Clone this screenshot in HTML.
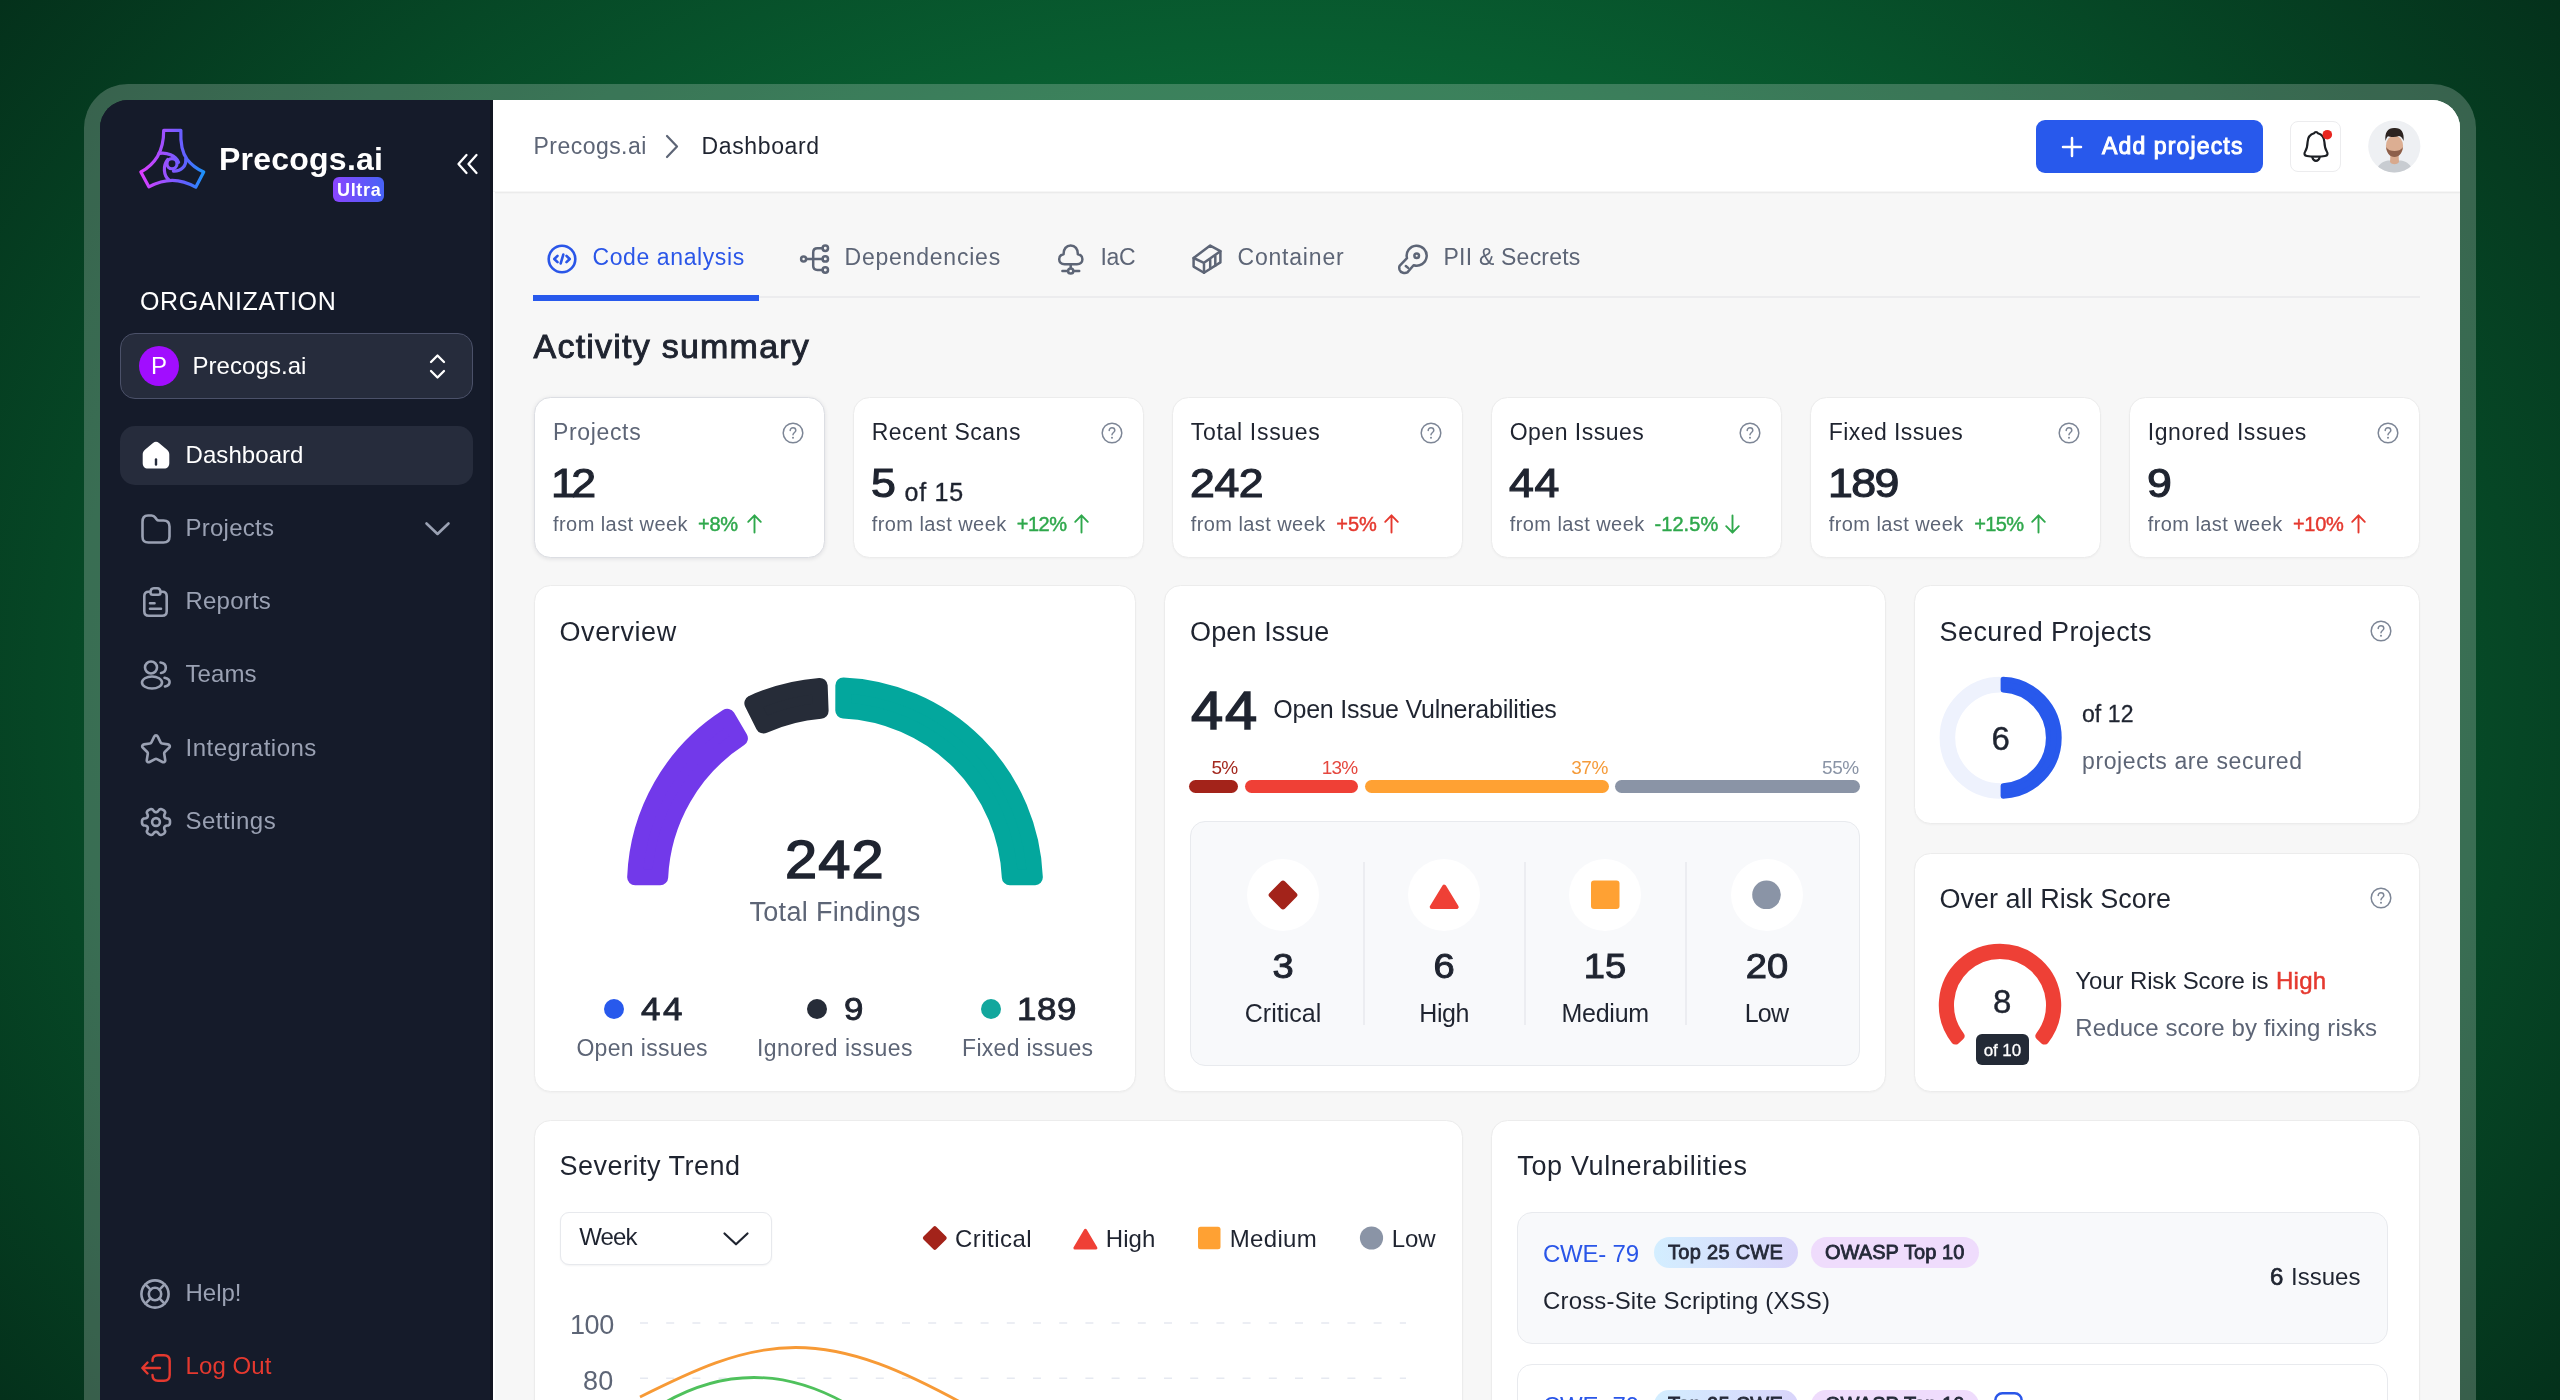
<!DOCTYPE html>
<html lang="en"><head>
<meta charset="utf-8">
<title>Precogs.ai Dashboard</title>
<style>
*{box-sizing:border-box;margin:0;padding:0}
html,body{width:2560px;height:1400px;overflow:hidden}
body{font-family:"Liberation Sans",sans-serif;color:#1f2430;background:#04311b radial-gradient(ellipse 1580px 1193px at 1280px 700px,rgb(13,147,74) 0%,rgb(4,49,27) 100%);position:relative}
.t{position:absolute;white-space:nowrap;line-height:1;transform:translateY(-50%)}
.c{transform:translate(-50%,-50%)}
.r{transform:translate(-100%,-50%)}
svg{position:absolute;overflow:visible}
#frame{position:absolute;left:84px;top:84px;width:2392px;height:1400px;border-radius:44px;background:rgba(255,255,255,.208)}
#app{position:absolute;left:100px;top:100px;width:2360px;height:1400px;border-radius:28px;background:linear-gradient(90deg,#151b2a 0,#151b2a 393px,#fff 393px,#fff 100%);overflow:hidden}
#pg{position:absolute;left:-100px;top:-100px;width:2560px;height:1500px;will-change:transform}
#pg div{position:absolute}
#side{left:100px;top:100px;width:393px;height:1400px;background:#151b2a}
#head{left:493px;top:100px;width:1967px;height:94px;background:linear-gradient(#fff 0,#fff 91px,#f6f6f6 91px,#f6f6f6 92px,#ebebeb 92px,#ebebeb 93px,#f3f3f3 93px,#f3f3f3 94px)}
.card{background:#fff;border:1.5px solid #ececec;border-radius:16.5px;box-shadow:0 1px 2px rgba(16,24,40,.03)}
.nav{color:#9aa1b3;font-size:24px;left:185.5px}
.g{color:#5d6576}
.b{font-weight:700}
.sb{font-weight:400;-webkit-text-stroke:.028em currentColor}
.ic{fill:none;stroke:#9aa1b3;stroke-width:2.6;stroke-linecap:round;stroke-linejoin:round}
.tic{fill:none;stroke:#5d6576;stroke-width:2.5;stroke-linecap:round;stroke-linejoin:round}
</style>
</head>
<body>
<div id="frame"></div>
<div id="app"><div id="pg">
<!-- SIDEBAR -->
<div id="side"></div><div style="left:490px;top:100px;width:3px;height:1400px;background:#121521"></div>
<svg style="left:130px;top:120px" width="100" height="80" viewBox="0 0 1750 1400">
<defs><linearGradient id="lg" x1="190" y1="0" x2="1290" y2="0" gradientUnits="userSpaceOnUse"><stop offset="0" stop-color="#dd3cff"></stop><stop offset=".45" stop-color="#8e55ff"></stop><stop offset=".72" stop-color="#5b62ff"></stop><stop offset="1" stop-color="#1b93fb"></stop></linearGradient></defs>
<g fill="none" stroke="url(#lg)" stroke-width="56" stroke-linejoin="round" stroke-linecap="round">
<path d="M590 180 L890 180 C880 420 930 600 1000 690 C1080 790 1180 860 1290 910 L1150 1175 C1000 1090 870 1055 740 1055 C610 1055 480 1090 330 1170 L190 910 C300 850 400 770 480 640 C540 540 590 400 590 180 Z"></path>
<circle cx="735" cy="765" r="88"></circle>
<path d="M510 585 C640 560 800 620 850 740"></path>
<path d="M975 685 C990 800 900 900 760 895"></path>
<path d="M680 1045 C590 980 570 800 660 690"></path>
</g></svg>
<div class="t b" style="left: 219px; top: 158.5px; font-size: 32px; color: rgb(255, 255, 255); letter-spacing: 0.23px;">Precogs.ai</div>
<div style="left:333px;top:177px;width:51px;height:25px;border-radius:6px;background:linear-gradient(90deg,#8a45ff,#4763f6)"></div>
<div class="t b" style="left: 337px; top: 189.5px; font-size: 18px; color: rgb(255, 255, 255); letter-spacing: 0.66px;">Ultra</div>
<svg style="left:457px;top:154px" width="21" height="20" viewBox="0 0 21 20"><path d="M9.5 1 L1.5 10 L9.5 19 M19.5 1 L11.5 10 L19.5 19" fill="none" stroke="#fff" stroke-width="2.3" stroke-linecap="round" stroke-linejoin="round"></path></svg>
<div class="t" style="left: 140px; top: 301px; font-size: 25px; color: rgb(255, 255, 255); letter-spacing: 0.66px;">ORGANIZATION</div>
<div style="left:120px;top:333px;width:353px;height:66px;border-radius:15px;background:#262c3c;border:1.5px solid #4b5169"></div>
<div style="left:139px;top:346px;width:40px;height:40px;border-radius:50%;background:#a10dff"></div>
<div class="t c" style="left:159px;top:366px;font-size:24px;color:#fff">P</div>
<div class="t" style="left: 192.5px; top: 366px; font-size: 24px; color: rgb(255, 255, 255); letter-spacing: 0.06px;">Precogs.ai</div>
<svg style="left:429px;top:353px" width="17" height="27" viewBox="0 0 17 27"><path d="M2 9 L8.5 2.5 L15 9 M2 18 L8.5 24.5 L15 18" fill="none" stroke="#fff" stroke-width="2.3" stroke-linecap="round" stroke-linejoin="round"></path></svg>
<div style="left:120px;top:426px;width:353px;height:59px;border-radius:15px;background:#262c3c"></div>
<svg style="left:141px;top:440px" width="30" height="30" viewBox="0 0 30 30"><path d="M15 1.8 C16 1.8 17 2.2 18 3 L25.5 9.2 C27.5 10.8 28.3 12.2 28.3 14.5 L28.3 23 C28.3 26.5 26.5 28.6 23 28.6 L7 28.6 C3.5 28.6 1.7 26.5 1.7 23 L1.7 14.5 C1.7 12.2 2.5 10.8 4.5 9.2 L12 3 C13 2.2 14 1.8 15 1.8 Z" fill="#fff"></path><path d="M15 19.5 L15 24.5" stroke="#262c3c" stroke-width="2.4" stroke-linecap="round"></path></svg>
<div class="t" style="left: 185.5px; top: 455px; font-size: 24px; color: rgb(255, 255, 255); letter-spacing: 0.07px;">Dashboard</div>
<!-- projects -->
<svg style="left:141px;top:514px" width="30" height="30" viewBox="0 0 30 30"><path class="ic" d="M1.5 8 C1.5 3.5 3 1.5 7 1.5 L10.5 1.5 C12.5 1.5 13.2 2 14.3 3.6 L15.5 5.2 C16.2 6.2 16.8 6.5 18 6.5 L22.5 6.5 C26.8 6.5 28.5 8.5 28.5 12.5 L28.5 22.5 C28.5 26.8 26.8 28.5 22.5 28.5 L7.5 28.5 C3.2 28.5 1.5 26.8 1.5 22.5 Z"></path></svg>
<div class="t nav" style="top: 528px; letter-spacing: 0.24px;">Projects</div>
<svg style="left:425px;top:522px" width="25" height="14" viewBox="0 0 25 14"><path class="ic" d="M1.5 1.5 L12.5 12 L23.5 1.5"></path></svg>
<!-- reports -->
<svg style="left:143px;top:587px" width="25" height="30" viewBox="0 0 25 30"><path class="ic" d="M7.5 4.8 L5.5 4.8 C2.8 4.8 1.3 6.3 1.3 9 L1.3 24.2 C1.3 27.2 2.8 28.7 5.8 28.7 L19.2 28.7 C22.2 28.7 23.7 27.2 23.7 24.2 L23.7 9 C23.7 6.3 22.2 4.8 19.5 4.8 L17.5 4.8 M7.5 5.5 C7.5 2.8 8.5 1.3 10.8 1.3 L14.2 1.3 C16.5 1.3 17.5 2.8 17.5 5.5 C17.5 7 16.8 7.7 15.3 7.7 L9.7 7.7 C8.2 7.7 7.5 7 7.5 5.5 Z M7 16.3 L11.5 16.3 M7 21.8 L18 21.8"></path></svg>
<div class="t nav" style="top: 601px; letter-spacing: 0.22px;">Reports</div>
<!-- teams -->
<svg style="left:140px;top:660px" width="31" height="30" viewBox="0 0 31 30"><g class="ic"><circle cx="11" cy="7.5" r="6"></circle><ellipse cx="12" cy="22.5" rx="10" ry="6"></ellipse><path d="M20.5 2.5 C23.5 2.8 25.8 4.8 25.8 7.8 C25.8 10.5 23.8 12.6 21 13 M24.5 17.8 C27.8 18.5 29.6 20 29.6 22 C29.6 24 28 25.8 25 26.5"></path></g></svg>
<div class="t nav" style="top: 674px; letter-spacing: 0.07px;">Teams</div>
<!-- integrations -->
<svg style="left:141px;top:734px" width="30" height="30" viewBox="0 0 30 30"><path class="ic" d="M13.2 2.6 C14 1 16 1 16.8 2.6 L19.6 8.4 C19.9 9 20.4 9.4 21.1 9.5 L27 10.4 C28.8 10.7 29.4 12.6 28.1 13.8 L23.8 18 C23.3 18.5 23.1 19.1 23.2 19.8 L24.2 26 C24.5 27.7 22.9 28.8 21.4 28 L16 25.1 C15.4 24.8 14.6 24.8 14 25.1 L8.6 28 C7.1 28.8 5.5 27.7 5.8 26 L6.8 19.8 C6.9 19.1 6.7 18.5 6.2 18 L1.9 13.8 C0.6 12.6 1.2 10.7 3 10.4 L8.9 9.5 C9.6 9.4 10.1 9 10.4 8.4 Z"></path></svg>
<div class="t nav" style="top: 748px; letter-spacing: 0.49px;">Integrations</div>
<!-- settings -->
<svg style="left:140.5px;top:806.9px" width="30" height="30" viewBox="0 0 30 30"><g class="ic" stroke-width="2.5"><circle cx="15" cy="15" r="3.9"></circle><path d="M29.00 15.00 L28.99 14.39 L28.95 13.78 L28.84 13.18 L28.54 12.61 L28.13 12.09 L27.58 11.63 L26.21 11.47 L25.16 11.30 L24.55 11.04 L24.09 10.76 L23.74 10.45 L23.49 10.10 L23.31 9.70 L23.22 9.24 L23.20 8.71 L23.28 8.05 L23.67 7.06 L24.21 5.79 L24.09 5.08 L23.84 4.47 L23.50 3.93 L23.03 3.53 L22.52 3.19 L22.00 2.88 L21.46 2.58 L20.92 2.31 L20.34 2.10 L19.70 2.08 L19.04 2.17 L18.37 2.42 L17.54 3.52 L16.88 4.35 L16.35 4.75 L15.87 5.00 L15.43 5.15 L15.00 5.20 L14.57 5.15 L14.13 5.00 L13.65 4.75 L13.12 4.35 L12.46 3.52 L11.63 2.42 L10.96 2.17 L10.30 2.08 L9.66 2.10 L9.08 2.31 L8.54 2.58 L8.00 2.88 L7.48 3.19 L6.97 3.53 L6.50 3.93 L6.16 4.47 L5.91 5.08 L5.79 5.79 L6.33 7.06 L6.72 8.05 L6.80 8.71 L6.78 9.24 L6.69 9.70 L6.51 10.10 L6.26 10.45 L5.91 10.76 L5.45 11.04 L4.84 11.30 L3.79 11.47 L2.42 11.63 L1.87 12.09 L1.46 12.61 L1.16 13.18 L1.05 13.78 L1.01 14.39 L1.00 15.00 L1.01 15.61 L1.05 16.22 L1.16 16.82 L1.46 17.39 L1.87 17.91 L2.42 18.37 L3.79 18.53 L4.84 18.70 L5.45 18.96 L5.91 19.24 L6.26 19.55 L6.51 19.90 L6.69 20.30 L6.78 20.76 L6.80 21.29 L6.72 21.95 L6.33 22.94 L5.79 24.21 L5.91 24.92 L6.16 25.53 L6.50 26.07 L6.97 26.47 L7.48 26.81 L8.00 27.12 L8.54 27.42 L9.08 27.69 L9.66 27.90 L10.30 27.92 L10.96 27.83 L11.63 27.58 L12.46 26.48 L13.12 25.65 L13.65 25.25 L14.13 25.00 L14.57 24.85 L15.00 24.80 L15.43 24.85 L15.87 25.00 L16.35 25.25 L16.88 25.65 L17.54 26.48 L18.37 27.58 L19.04 27.83 L19.70 27.92 L20.34 27.90 L20.92 27.69 L21.46 27.42 L22.00 27.12 L22.52 26.81 L23.03 26.47 L23.50 26.07 L23.84 25.53 L24.09 24.92 L24.21 24.21 L23.67 22.94 L23.28 21.95 L23.20 21.29 L23.22 20.76 L23.31 20.30 L23.49 19.90 L23.74 19.55 L24.09 19.24 L24.55 18.96 L25.16 18.70 L26.21 18.53 L27.58 18.37 L28.13 17.91 L28.54 17.39 L28.84 16.82 L28.95 16.22 L28.99 15.61 Z"></path></g></svg>
<div class="t nav" style="top: 821px; letter-spacing: 0.5px;">Settings</div>
<!-- help -->
<svg style="left:140px;top:1279px" width="30" height="30" viewBox="0 0 30 30"><g class="ic"><circle cx="15" cy="15" r="13.6"></circle><circle cx="15" cy="15" r="6.2"></circle><path d="M5.4 5.4 L10.6 10.6 M24.6 5.4 L19.4 10.6 M5.4 24.6 L10.6 19.4 M24.6 24.6 L19.4 19.4"></path></g></svg>
<div class="t nav" style="top: 1293px; letter-spacing: -0.01px;">Help!</div>
<svg style="left:141px;top:1354.3px" width="30" height="28" viewBox="0 0 30 28"><g fill="none" stroke="#e5392f" stroke-width="2.4" stroke-linecap="round" stroke-linejoin="round"><path d="M11.5 7 C11.5 3 13 1.3 17 1.3 L23 1.3 C27 1.3 28.7 3 28.7 7 L28.7 21 C28.7 25 27 26.7 23 26.7 L17 26.7 C13 26.7 11.5 25 11.5 21"></path><path d="M19 14 L1.5 14 M6.5 8.5 L1.3 14 L6.5 19.5"></path></g></svg>
<div class="t" style="left: 185.5px; top: 1366px; font-size: 24px; color: rgb(229, 57, 47); letter-spacing: 0.09px;">Log Out</div>
<!-- HEADER -->
<div style="left:493px;top:100px;width:1967px;height:1400px;background:#f7f7f7"></div><div id="head"></div><div style="left:493.3px;top:192px;width:2px;height:1300px;background:#fff"></div>
<!--HC-->
<div class="t g" style="left: 533.5px; top: 145.8px; font-size: 23px; letter-spacing: 0.46px;">Precogs.ai</div>
<svg style="left:665px;top:134px" width="14" height="25" viewBox="0 0 14 25"><path d="M2 2 L12 12.5 L2 23" fill="none" stroke="#5d6576" stroke-width="2.2" stroke-linecap="round" stroke-linejoin="round"></path></svg>
<div class="t" style="left: 701.5px; top: 145.8px; font-size: 23px; color: rgb(31, 36, 48); letter-spacing: 0.64px;">Dashboard</div>
<div style="left:2036px;top:120px;width:227px;height:53px;border-radius:9px;background:#2859ec"></div>
<svg style="left:2062px;top:137px" width="20" height="20" viewBox="0 0 20 20"><path d="M10 1 L10 19 M1 10 L19 10" stroke="#fff" stroke-width="2.5" stroke-linecap="round"></path></svg>
<div class="t sb" style="left: 2102px; top: 145.8px; font-size: 23px; color: rgb(255, 255, 255); -webkit-text-stroke-width: 1px; letter-spacing: 1.14px;">Add projects</div>
<div style="left:2290px;top:121px;width:51px;height:51px;border-radius:8px;background:#fff;border:1.5px solid #ececee"></div>
<svg style="left:2300px;top:128px" width="36" height="36" viewBox="0 0 36 36"><g fill="none" stroke="#1c1f24" stroke-width="2.2" stroke-linecap="round" stroke-linejoin="round"><path d="M14.2 5.2 C14.8 3.6 17.2 3.6 17.8 5.2 C21.8 6.2 24.2 9.5 24.4 14 C24.6 18.5 25.2 21 26.8 23.5 C28.3 25.8 27.5 27.6 25 28 C21 28.7 11 28.7 7 28 C4.5 27.6 3.7 25.8 5.2 23.5 C6.8 21 7.4 18.5 7.6 14 C7.8 9.5 10.2 6.2 14.2 5.2 Z"></path><path d="M12.3 29.2 C13 31.8 14.5 32.8 16 32.8 C17.5 32.8 19 31.8 19.7 29.2"></path></g><circle cx="27.3" cy="6.7" r="4.8" fill="#e8251f"></circle></svg>
<svg style="left:2368px;top:120px" width="53" height="53" viewBox="0 0 53 53"><defs><clipPath id="av"><circle cx="26.3" cy="26.3" r="26.1"></circle></clipPath></defs><g clip-path="url(#av)"><rect width="53" height="53" fill="#eef0f3"></rect><path d="M8 53 C9 45 14 41.5 20 40.5 L33 40.5 C39 41.5 44 45 45 53 Z" fill="#c8ccd1"></path><path d="M22.5 33 L30.5 33 L31 42 C29 45 24 45 22 42 Z" fill="#d8a98d"></path><ellipse cx="26.5" cy="26" rx="8.6" ry="10.5" fill="#dcae92"></ellipse><path d="M18.2 27 C18.5 33 22 37 26.5 37 C31 37 34.5 33 34.8 27 C33 30 30 31 26.5 31 C23 31 20 30 18.2 27 Z" fill="#8d5f4a"></path><path d="M17.5 21 C16.5 12 20 8 26 8 C33 7.5 36.5 12 35.6 21 C34.5 18 33 16.5 31 16 C27 17.5 22 17 20 16.2 C18.5 17.5 18 19 17.5 21 Z" fill="#2c2320"></path></g></svg>
<!-- TABS -->
<div style="left:533px;top:296px;width:1887px;height:2px;background:#ececee"></div>
<div style="left:533px;top:295px;width:226px;height:5.5px;background:#2859ec"></div>
<svg style="left:547px;top:243.5px" width="30" height="30" viewBox="0 0 30 30"><g fill="none" stroke="#2a56e8" stroke-width="2.6" stroke-linecap="round" stroke-linejoin="round"><circle cx="15" cy="15" r="13.3"></circle><path d="M10.5 11.8 L7.3 15 L10.5 18.2 M19.5 11.8 L22.7 15 L19.5 18.2 M16.3 10.6 L13.7 19.4"></path></g></svg>
<div class="t" style="left: 592.5px; top: 257.1px; font-size: 23px; color: rgb(42, 86, 232); letter-spacing: 0.6px;">Code analysis</div>
<svg style="left:800px;top:243.5px" width="30" height="30" viewBox="0 0 30 30"><g class="tic" stroke-width="2.3"><circle cx="3.6" cy="14.9" r="2.5"></circle><circle cx="25.3" cy="4.2" r="2.7"></circle><circle cx="25.3" cy="14.9" r="2.7"></circle><circle cx="25.3" cy="26" r="2.7"></circle><path d="M6.2 14.9 L22.5 14.9 M22.5 4.2 L17.4 4.2 Q13.2 4.2 13.2 8.4 L13.2 21.8 Q13.2 26 17.4 26 L22.5 26"></path></g></svg>
<div class="t g" style="left: 844.5px; top: 257.1px; font-size: 23px; letter-spacing: 0.78px;">Dependencies</div>
<svg style="left:1057px;top:243px" width="28" height="31" viewBox="0 0 28 31"><g class="tic" stroke-width="2.3"><path d="M7.6 21.2 C4.2 21.2 2.2 19 2.2 16.2 C2.2 13.5 4 11.6 6.6 11.2 C6.4 6 9.4 2.4 13.7 2.4 C18 2.4 21 6 20.8 11.2 C23.4 11.6 25.4 13.5 25.4 16.2 C25.4 19 23.4 21.2 20 21.2 Z"></path><path d="M13.7 21.2 L13.7 25.2 M5.4 28 L11 28 M16.4 28 L22.2 28"></path><circle cx="13.7" cy="28" r="2.6"></circle></g></svg>
<div class="t g" style="left: 1100.5px; top: 257.1px; font-size: 23px; letter-spacing: -0.32px;">IaC</div>
<svg style="left:1192px;top:243.5px" width="30" height="30" viewBox="0 0 30 30"><g class="tic" stroke-width="2.3"><path d="M1.6 14 L18.2 1.6 L28.4 7.2 L28.4 18.4 L12 28.8 L1.6 22.6 Z"></path><path d="M1.6 14 L12 18.8 L28.4 7.2 M12 18.8 L12 28.8 M18.2 14.6 L18.2 24.6 M23.3 11 L23.3 21.4"></path></g></svg>
<div class="t g" style="left: 1237.5px; top: 257.1px; font-size: 23px; letter-spacing: 0.8px;">Container</div>
<svg style="left:1398px;top:243.5px" width="31" height="30" viewBox="0 0 31 30"><g class="tic" stroke-width="2.3"><path d="M9 14.2 A10 10 0 1 1 15.6 21.2 L9.4 28.4 C7 29.6 2.6 29 1.6 25.8 C1.2 24.4 1 22.6 1.8 21.6 Z"></path><circle cx="18.7" cy="11.8" r="2.3"></circle><path d="M7.8 22 L10.1 23.9"></path></g></svg>
<div class="t g" style="left: 1443.5px; top: 257.1px; font-size: 23px; letter-spacing: 0.22px;">PII &amp; Secrets</div>
<div class="t sb" style="left: 533.5px; top: 345.8px; font-size: 34px; color: rgb(31, 36, 48); letter-spacing: 1.23px;">Activity summary</div>
<!--/HC-->
<!--MC-->
<div class="card" style="left:534px;top:397px;width:290.5px;height:160.5px;border-color:#dcdee3;box-shadow:0 1px 4px rgba(16,24,40,.10)"></div>
<div class="t" style="left: 553px; top: 432.3px; font-size: 23px; color: rgb(93, 101, 118); letter-spacing: 0.65px;">Projects</div>
<svg style="left:781.7px;top:422px" width="22" height="22" viewBox="0 0 22 22"><g fill="none" stroke="#7d8696" stroke-width="1.5" stroke-linecap="round" stroke-linejoin="round"><circle cx="11" cy="11" r="9.8"></circle><path d="M8.2 8.6 C8.2 6.9 9.4 5.8 11 5.8 C12.6 5.8 13.8 6.9 13.8 8.4 C13.8 10.4 11 10.6 11 12.8"></path></g><circle cx="11" cy="15.8" r="1" fill="#7d8696"></circle></svg>
<div class="t sb" style="left: 551.2px; top: 482.5px; font-size: 41px; transform: translateY(-50%) scaleX(1.09); transform-origin: left center; color: rgb(31, 36, 48); letter-spacing: -4.14px;">12</div>
<div class="t" style="left: 553px; top: 523.8px; font-size: 20px; color: rgb(93, 101, 118); letter-spacing: 0.43px;">from last week</div>
<div class="t" style="left: 698px; top: 523.8px; font-size: 20px; color: rgb(47, 168, 76); -webkit-text-stroke: 0.45px rgb(47, 168, 76); letter-spacing: -0.24px;">+8%</div>
<svg style="left:746.5px;top:514.3px" width="15" height="20" viewBox="0 0 15 20"><path d="M7.5 18.5 L7.5 1.5 M1.2 7.8 L7.5 1.3 L13.8 7.8" fill="none" stroke="#2fa84c" stroke-width="1.9" stroke-linecap="round" stroke-linejoin="round"></path></svg>
<div class="card" style="left:853px;top:397px;width:290.5px;height:160.7px"></div>
<div class="t" style="left: 871.7px; top: 432.3px; font-size: 23px; color: rgb(31, 36, 48); letter-spacing: 0.5px;">Recent Scans</div>
<svg style="left:1100.7px;top:422px" width="22" height="22" viewBox="0 0 22 22"><g fill="none" stroke="#7d8696" stroke-width="1.5" stroke-linecap="round" stroke-linejoin="round"><circle cx="11" cy="11" r="9.8"></circle><path d="M8.2 8.6 C8.2 6.9 9.4 5.8 11 5.8 C12.6 5.8 13.8 6.9 13.8 8.4 C13.8 10.4 11 10.6 11 12.8"></path></g><circle cx="11" cy="15.8" r="1" fill="#7d8696"></circle></svg>
<div class="t sb" style="left:870.9000000000001px;top:482.5px;font-size:41px;transform:translateY(-50%) scaleX(1.09);transform-origin:left center;color:#1f2430">5</div>
<div class="t" style="left: 904.5px; top: 491.5px; font-size: 25px; color: rgb(31, 36, 48); -webkit-text-stroke: 0.35px rgb(31, 36, 48); letter-spacing: 0.75px;">of 15</div>
<div class="t" style="left: 871.7px; top: 523.8px; font-size: 20px; color: rgb(93, 101, 118); letter-spacing: 0.43px;">from last week</div>
<div class="t" style="left: 1016.8px; top: 523.8px; font-size: 20px; color: rgb(47, 168, 76); -webkit-text-stroke: 0.45px rgb(47, 168, 76); letter-spacing: -0.49px;">+12%</div>
<svg style="left:1074px;top:514.3px" width="15" height="20" viewBox="0 0 15 20"><path d="M7.5 18.5 L7.5 1.5 M1.2 7.8 L7.5 1.3 L13.8 7.8" fill="none" stroke="#2fa84c" stroke-width="1.9" stroke-linecap="round" stroke-linejoin="round"></path></svg>
<div class="card" style="left:1172px;top:397px;width:290.5px;height:160.7px"></div>
<div class="t" style="left: 1190.7px; top: 432.3px; font-size: 23px; color: rgb(31, 36, 48); letter-spacing: 0.7px;">Total Issues</div>
<svg style="left:1419.7px;top:422px" width="22" height="22" viewBox="0 0 22 22"><g fill="none" stroke="#7d8696" stroke-width="1.5" stroke-linecap="round" stroke-linejoin="round"><circle cx="11" cy="11" r="9.8"></circle><path d="M8.2 8.6 C8.2 6.9 9.4 5.8 11 5.8 C12.6 5.8 13.8 6.9 13.8 8.4 C13.8 10.4 11 10.6 11 12.8"></path></g><circle cx="11" cy="15.8" r="1" fill="#7d8696"></circle></svg>
<div class="t sb" style="left: 1189.9px; top: 482.5px; font-size: 41px; transform: translateY(-50%) scaleX(1.09); transform-origin: left center; color: rgb(31, 36, 48); letter-spacing: -0.43px;">242</div>
<div class="t" style="left: 1190.7px; top: 523.8px; font-size: 20px; color: rgb(93, 101, 118); letter-spacing: 0.43px;">from last week</div>
<div class="t" style="left: 1336.3px; top: 523.8px; font-size: 20px; color: rgb(229, 57, 47); -webkit-text-stroke: 0.45px rgb(229, 57, 47); letter-spacing: -0.04px;">+5%</div>
<svg style="left:1384px;top:514.3px" width="15" height="20" viewBox="0 0 15 20"><path d="M7.5 18.5 L7.5 1.5 M1.2 7.8 L7.5 1.3 L13.8 7.8" fill="none" stroke="#e5392f" stroke-width="1.9" stroke-linecap="round" stroke-linejoin="round"></path></svg>
<div class="card" style="left:1491px;top:397px;width:290.5px;height:160.7px"></div>
<div class="t" style="left: 1509.7px; top: 432.3px; font-size: 23px; color: rgb(31, 36, 48); letter-spacing: 0.49px;">Open Issues</div>
<svg style="left:1738.7px;top:422px" width="22" height="22" viewBox="0 0 22 22"><g fill="none" stroke="#7d8696" stroke-width="1.5" stroke-linecap="round" stroke-linejoin="round"><circle cx="11" cy="11" r="9.8"></circle><path d="M8.2 8.6 C8.2 6.9 9.4 5.8 11 5.8 C12.6 5.8 13.8 6.9 13.8 8.4 C13.8 10.4 11 10.6 11 12.8"></path></g><circle cx="11" cy="15.8" r="1" fill="#7d8696"></circle></svg>
<div class="t sb" style="left: 1508.9px; top: 482.5px; font-size: 41px; transform: translateY(-50%) scaleX(1.09); transform-origin: left center; color: rgb(31, 36, 48); letter-spacing: 0.52px;">44</div>
<div class="t" style="left: 1509.7px; top: 523.8px; font-size: 20px; color: rgb(93, 101, 118); letter-spacing: 0.43px;">from last week</div>
<div class="t" style="left: 1654.5px; top: 523.8px; font-size: 20px; color: rgb(47, 168, 76); -webkit-text-stroke: 0.45px rgb(47, 168, 76); letter-spacing: 0.06px;">-12.5%</div>
<svg style="left:1725px;top:514.3px" width="15" height="20" viewBox="0 0 15 20"><path d="M7.5 1.5 L7.5 18.5 M1.2 12.2 L7.5 18.7 L13.8 12.2" fill="none" stroke="#2fa84c" stroke-width="1.9" stroke-linecap="round" stroke-linejoin="round"></path></svg>
<div class="card" style="left:1810px;top:397px;width:290.5px;height:160.7px"></div>
<div class="t" style="left: 1828.7px; top: 432.3px; font-size: 23px; color: rgb(31, 36, 48); letter-spacing: 0.45px;">Fixed Issues</div>
<svg style="left:2057.7px;top:422px" width="22" height="22" viewBox="0 0 22 22"><g fill="none" stroke="#7d8696" stroke-width="1.5" stroke-linecap="round" stroke-linejoin="round"><circle cx="11" cy="11" r="9.8"></circle><path d="M8.2 8.6 C8.2 6.9 9.4 5.8 11 5.8 C12.6 5.8 13.8 6.9 13.8 8.4 C13.8 10.4 11 10.6 11 12.8"></path></g><circle cx="11" cy="15.8" r="1" fill="#7d8696"></circle></svg>
<div class="t sb" style="left: 1827.9px; top: 482.5px; font-size: 41px; transform: translateY(-50%) scaleX(1.09); transform-origin: left center; color: rgb(31, 36, 48); letter-spacing: -1.43px;">189</div>
<div class="t" style="left: 1828.7px; top: 523.8px; font-size: 20px; color: rgb(93, 101, 118); letter-spacing: 0.43px;">from last week</div>
<div class="t" style="left: 1974.3px; top: 523.8px; font-size: 20px; color: rgb(47, 168, 76); -webkit-text-stroke: 0.45px rgb(47, 168, 76); letter-spacing: -0.63px;">+15%</div>
<svg style="left:2031px;top:514.3px" width="15" height="20" viewBox="0 0 15 20"><path d="M7.5 18.5 L7.5 1.5 M1.2 7.8 L7.5 1.3 L13.8 7.8" fill="none" stroke="#2fa84c" stroke-width="1.9" stroke-linecap="round" stroke-linejoin="round"></path></svg>
<div class="card" style="left:2129px;top:397px;width:290.5px;height:160.7px"></div>
<div class="t" style="left: 2147.7px; top: 432.3px; font-size: 23px; color: rgb(31, 36, 48); letter-spacing: 0.6px;">Ignored Issues</div>
<svg style="left:2376.7px;top:422px" width="22" height="22" viewBox="0 0 22 22"><g fill="none" stroke="#7d8696" stroke-width="1.5" stroke-linecap="round" stroke-linejoin="round"><circle cx="11" cy="11" r="9.8"></circle><path d="M8.2 8.6 C8.2 6.9 9.4 5.8 11 5.8 C12.6 5.8 13.8 6.9 13.8 8.4 C13.8 10.4 11 10.6 11 12.8"></path></g><circle cx="11" cy="15.8" r="1" fill="#7d8696"></circle></svg>
<div class="t sb" style="left:2146.8999999999996px;top:482.5px;font-size:41px;transform:translateY(-50%) scaleX(1.09);transform-origin:left center;color:#1f2430">9</div>
<div class="t" style="left: 2147.7px; top: 523.8px; font-size: 20px; color: rgb(93, 101, 118); letter-spacing: 0.43px;">from last week</div>
<div class="t" style="left: 2293px; top: 523.8px; font-size: 20px; color: rgb(229, 57, 47); -webkit-text-stroke: 0.45px rgb(229, 57, 47); letter-spacing: -0.32px;">+10%</div>
<svg style="left:2351px;top:514.3px" width="15" height="20" viewBox="0 0 15 20"><path d="M7.5 18.5 L7.5 1.5 M1.2 7.8 L7.5 1.3 L13.8 7.8" fill="none" stroke="#e5392f" stroke-width="1.9" stroke-linecap="round" stroke-linejoin="round"></path></svg>
<div class="card" style="left:533.5px;top:585px;width:602.5px;height:506.5px"></div>
<div class="card" style="left:1163.5px;top:585px;width:722.5px;height:506.5px"></div>
<div class="card" style="left:1913.5px;top:585px;width:506.5px;height:239px"></div>
<div class="card" style="left:1913.5px;top:852.5px;width:506.5px;height:239px"></div>
<div class="t" style="left: 559.5px; top: 631.5px; font-size: 27px; color: rgb(31, 36, 48); letter-spacing: 0.6px;">Overview</div>
<div class="t" style="left: 1190px; top: 631.5px; font-size: 27px; color: rgb(31, 36, 48); letter-spacing: 0.13px;">Open Issue</div>
<div class="t" style="left: 1939.5px; top: 631.5px; font-size: 27px; color: rgb(31, 36, 48); letter-spacing: 0.43px;">Secured Projects</div>
<div class="t" style="left: 1939.5px; top: 898.5px; font-size: 27px; color: rgb(31, 36, 48); letter-spacing: 0.02px;">Over all Risk Score</div>
<svg style="left:2370.3px;top:620px" width="22" height="22" viewBox="0 0 22 22"><g fill="none" stroke="#7d8696" stroke-width="1.5" stroke-linecap="round" stroke-linejoin="round"><circle cx="11" cy="11" r="9.8"></circle><path d="M8.2 8.6 C8.2 6.9 9.4 5.8 11 5.8 C12.6 5.8 13.8 6.9 13.8 8.4 C13.8 10.4 11 10.6 11 12.8"></path></g><circle cx="11" cy="15.8" r="1" fill="#7d8696"></circle></svg>
<svg style="left:2370.3px;top:887px" width="22" height="22" viewBox="0 0 22 22"><g fill="none" stroke="#7d8696" stroke-width="1.5" stroke-linecap="round" stroke-linejoin="round"><circle cx="11" cy="11" r="9.8"></circle><path d="M8.2 8.6 C8.2 6.9 9.4 5.8 11 5.8 C12.6 5.8 13.8 6.9 13.8 8.4 C13.8 10.4 11 10.6 11 12.8"></path></g><circle cx="11" cy="15.8" r="1" fill="#7d8696"></circle></svg>
<svg style="left:0;top:0" width="2560" height="1400" viewBox="0 0 2560 1400">
<path d="M635.16 877.30 A200.00 200.00 0 0 1 727.27 716.79 L739.90 738.40 A175.00 175.00 0 0 0 660.18 877.30 Z" fill="#7239ea" stroke="#7239ea" stroke-width="16" stroke-linejoin="round"></path>
<path d="M752.35 703.18 A200.00 200.00 0 0 1 819.68 685.89 L820.60 710.89 A175.00 175.00 0 0 0 763.60 725.53 Z" fill="#262c38" stroke="#262c38" stroke-width="16" stroke-linejoin="round"></path>
<path d="M843.35 685.47 A200.00 200.00 0 0 1 1034.84 877.30 L1009.82 877.30 A175.00 175.00 0 0 0 843.30 710.50 Z" fill="#03a79d" stroke="#03a79d" stroke-width="16" stroke-linejoin="round"></path>
<circle cx="2000.6" cy="737.8" r="53.2" fill="none" stroke="#eef2fd" stroke-width="15.6"></circle>
<path d="M2003.10 679.35 A58.50 58.50 0 0 1 2003.10 796.25 L2003.10 785.63 A47.90 47.90 0 0 0 2003.10 689.97 Z" fill="#2859ec" stroke="#2859ec" stroke-width="5.0" stroke-linejoin="round"></path>
<path d="M1955.47 1040.10 A56.70 56.70 0 1 1 2044.53 1040.10 L2039.96 1035.88 A50.50 50.50 0 1 0 1960.04 1035.88 Z" fill="#ee4036" stroke="#ee4036" stroke-width="9.0" stroke-linejoin="round"></path>
</svg>
<div class="t sb c" style="left: 835px; top: 859px; font-size: 53px; transform: translate(-50%, -50%) scaleX(1.09); color: rgb(31, 36, 48); letter-spacing: 1.04px;">242</div>
<div class="t c" style="left: 835px; top: 912.2px; font-size: 27px; color: rgb(93, 101, 118); letter-spacing: 0.33px;">Total Findings</div>
<div style="left:603.6px;top:999px;width:20px;height:20px;border-radius:50%;background:#2859ec"></div>
<div class="t sb" style="left: 640.5px; top: 1009px; font-size: 32px; transform: translateY(-50%) scaleX(1.09); transform-origin: left center; color: rgb(31, 36, 48); letter-spacing: 2.47px;">44</div>
<div class="t" style="left: 576.4px; top: 1048.2px; font-size: 23px; color: rgb(93, 101, 118); letter-spacing: 0.33px;">Open issues</div>
<div style="left:807.3px;top:999px;width:20px;height:20px;border-radius:50%;background:#262c38"></div>
<div class="t sb" style="left: 844.4px; top: 1009px; font-size: 32px; transform: translateY(-50%) scaleX(1.09); transform-origin: left center; color: rgb(31, 36, 48); letter-spacing: -0.4px;">9</div>
<div class="t" style="left: 756.9px; top: 1048.2px; font-size: 23px; color: rgb(93, 101, 118); letter-spacing: 0.46px;">Ignored issues</div>
<div style="left:981px;top:999px;width:20px;height:20px;border-radius:50%;background:#12a79d"></div>
<div class="t sb" style="left: 1016.5px; top: 1009px; font-size: 32px; transform: translateY(-50%) scaleX(1.09); transform-origin: left center; color: rgb(31, 36, 48); letter-spacing: 0.52px;">189</div>
<div class="t" style="left: 962.1px; top: 1048.2px; font-size: 23px; color: rgb(93, 101, 118); letter-spacing: 0.28px;">Fixed issues</div>
<div class="t sb" style="left: 1190.5px; top: 710px; font-size: 53px; transform: translateY(-50%) scaleX(1.09); transform-origin: left center; color: rgb(31, 36, 48); letter-spacing: 1.83px;">44</div>
<div class="t" style="left: 1273.3px; top: 708.8px; font-size: 25px; color: rgb(31, 36, 48); letter-spacing: -0.24px;">Open Issue Vulnerabilities</div>
<div style="left:1189.3px;top:780px;width:48.9px;height:13px;border-radius:6.5px;background:#a3231a"></div>
<div class="t r" style="left: 1237.4px; top: 767px; font-size: 19px; color: rgb(163, 41, 31); letter-spacing: -0.78px;">5%</div>
<div style="left:1245px;top:780px;width:113.2px;height:13px;border-radius:6.5px;background:#ef4036"></div>
<div class="t r" style="left: 1357.4px; top: 767px; font-size: 19px; color: rgb(229, 72, 63); letter-spacing: -0.81px;">13%</div>
<div style="left:1364.7px;top:780px;width:244.1px;height:13px;border-radius:6.5px;background:#ffa133"></div>
<div class="t r" style="left: 1608px; top: 767px; font-size: 19px; color: rgb(245, 155, 58); letter-spacing: -0.41px;">37%</div>
<div style="left:1615.4px;top:780px;width:244.2px;height:13px;border-radius:6.5px;background:#8a94a6"></div>
<div class="t r" style="left: 1858.8px; top: 767px; font-size: 19px; color: rgb(138, 148, 166); letter-spacing: -0.41px;">55%</div>
<div style="left:1189.5px;top:820.5px;width:670.5px;height:245px;border-radius:15px;background:#f8f9fb;border:1.5px solid #e8eaee"></div>
<div style="left:1247px;top:859px;width:72px;height:72px;border-radius:50%;background:#fff"></div>
<div style="left:1363.2px;top:862px;width:1.6px;height:163px;background:#ecedf1"></div>
<div class="t sb c" style="left:1283px;top:965.2px;font-size:35px;transform:translate(-50%,-50%) scaleX(1.09);color:#1f2430">3</div>
<div class="t c" style="left: 1283px; top: 1012.5px; font-size: 25px; color: rgb(31, 36, 48); letter-spacing: 0.01px;">Critical</div>
<div style="left:1408.2px;top:859px;width:72px;height:72px;border-radius:50%;background:#fff"></div>
<div style="left:1524.4px;top:862px;width:1.6px;height:163px;background:#ecedf1"></div>
<div class="t sb c" style="left:1444.2px;top:965.2px;font-size:35px;transform:translate(-50%,-50%) scaleX(1.09);color:#1f2430">6</div>
<div class="t c" style="left: 1444.2px; top: 1012.5px; font-size: 25px; color: rgb(31, 36, 48); letter-spacing: -0.41px;">High</div>
<div style="left:1569.2px;top:859px;width:72px;height:72px;border-radius:50%;background:#fff"></div>
<div style="left:1685.4px;top:862px;width:1.6px;height:163px;background:#ecedf1"></div>
<div class="t sb c" style="left:1605.2px;top:965.2px;font-size:35px;transform:translate(-50%,-50%) scaleX(1.09);color:#1f2430">15</div>
<div class="t c" style="left: 1605.2px; top: 1012.5px; font-size: 25px; color: rgb(31, 36, 48); letter-spacing: -0.26px;">Medium</div>
<div style="left:1730.5px;top:859px;width:72px;height:72px;border-radius:50%;background:#fff"></div>
<div class="t sb c" style="left:1766.5px;top:965.2px;font-size:35px;transform:translate(-50%,-50%) scaleX(1.09);color:#1f2430">20</div>
<div class="t c" style="left: 1766.5px; top: 1012.5px; font-size: 25px; color: rgb(31, 36, 48); letter-spacing: -0.75px;">Low</div>
<svg style="left:0;top:0" width="2560" height="1400" viewBox="0 0 2560 1400">
<rect x="1272.00" y="884.00" width="22" height="22" rx="3" fill="#a3231a" transform="rotate(45 1283 895)"></rect>
<path d="M1444.2 886.60 L1456.70 907.00 L1431.70 907.00 Z" fill="#ef4036" stroke="#ef4036" stroke-width="4" stroke-linejoin="round"></path>
<rect x="1591" y="880.5" width="28.5" height="28.5" rx="3" fill="#ffa133"></rect>
<circle cx="1766.5" cy="894.8" r="14.3" fill="#8a94a6"></circle>
</svg>
<div class="t c" style="left:2000.6px;top:738.3px;font-size:33px;color:#1f2430;-webkit-text-stroke:.4px #1f2430">6</div>
<div class="t" style="left: 2082px; top: 713.5px; font-size: 23px; color: rgb(31, 36, 48); -webkit-text-stroke: 0.3px rgb(31, 36, 48); letter-spacing: 0.08px;">of 12</div>
<div class="t" style="left: 2082px; top: 760.8px; font-size: 23px; color: rgb(93, 101, 118); letter-spacing: 0.61px;">projects are secured</div>
<div class="t c" style="left:2002.3px;top:1000.5px;font-size:33px;color:#1f2430;-webkit-text-stroke:.4px #1f2430">8</div>
<div style="left:1976px;top:1034.3px;width:53px;height:30.3px;border-radius:6px;background:#232a36"></div>
<div class="t c" style="left: 2002.4px; top: 1050px; font-size: 17px; color: rgb(255, 255, 255); -webkit-text-stroke: 0.3px rgb(255, 255, 255); letter-spacing: -0.07px;">of 10</div>
<div class="t" style="left: 2075.3px; top: 980.6px; font-size: 24px; color: rgb(31, 36, 48); letter-spacing: -0.11px;">Your Risk Score is</div>
<div class="t" style="left: 2275.9px; top: 980.6px; font-size: 24px; color: rgb(229, 57, 47); -webkit-text-stroke: 0.5px rgb(229, 57, 47); letter-spacing: 0.3px;">High</div>
<div class="t" style="left: 2075.3px; top: 1027.8px; font-size: 24px; color: rgb(93, 101, 118); letter-spacing: 0.11px;">Reduce score by fixing risks</div>
<div class="card" style="left:533.5px;top:1119.5px;width:929px;height:400px"></div>
<div class="card" style="left:1490.5px;top:1119.5px;width:929px;height:400px"></div>
<div class="t" style="left: 559.5px; top: 1165.5px; font-size: 27px; color: rgb(31, 36, 48); letter-spacing: 0.49px;">Severity Trend</div>
<div class="t" style="left: 1517.3px; top: 1165.5px; font-size: 27px; color: rgb(31, 36, 48); letter-spacing: 0.64px;">Top Vulnerabilities</div>
<div style="left:559.5px;top:1211.5px;width:212px;height:53px;border-radius:9px;background:#fff;border:1.5px solid #e7e9ed;box-shadow:0 1px 2px rgba(16,24,40,.05)"></div>
<div class="t" style="left: 579.2px; top: 1237.3px; font-size: 24px; color: rgb(31, 36, 48); letter-spacing: -0.83px;">Week</div>
<svg style="left:723px;top:1231.5px" width="26" height="14" viewBox="0 0 26 14"><path d="M1.5 1.5 L13 12.3 L24.5 1.5" fill="none" stroke="#1f2430" stroke-width="2.2" stroke-linecap="round" stroke-linejoin="round"></path></svg>
<div class="t" style="left: 955px; top: 1238.5px; font-size: 24px; color: rgb(31, 36, 48); letter-spacing: 0.46px;">Critical</div>
<div class="t" style="left: 1105.7px; top: 1238.5px; font-size: 24px; color: rgb(31, 36, 48); letter-spacing: 0.13px;">High</div>
<div class="t" style="left: 1229.8px; top: 1238.5px; font-size: 24px; color: rgb(31, 36, 48); letter-spacing: 0.3px;">Medium</div>
<div class="t" style="left: 1391.8px; top: 1238.5px; font-size: 24px; color: rgb(31, 36, 48); letter-spacing: -0.09px;">Low</div>
<div class="t r" style="left: 613.8px; top: 1325.2px; font-size: 27px; color: rgb(93, 101, 118); letter-spacing: -0.42px;">100</div>
<div class="t r" style="left: 613.8px; top: 1380.7px; font-size: 27px; color: rgb(93, 101, 118); letter-spacing: 0.44px;">80</div>
<svg style="left:0;top:0" width="2560" height="1400" viewBox="0 0 2560 1400">
<rect x="925.80" y="1229.00" width="18" height="18" rx="2" fill="#a3231a" transform="rotate(45 934.8 1238)"></rect>
<path d="M1085.4 1230.20 L1095.90 1248.00 L1074.90 1248.00 Z" fill="#ef4036" stroke="#ef4036" stroke-width="3" stroke-linejoin="round"></path>
<rect x="1198" y="1226.7" width="22.5" height="22.5" rx="2.5" fill="#ffa133"></rect>
<circle cx="1371.5" cy="1238" r="11.6" fill="#8a94a6"></circle>
<path d="M640 1323 L1406 1323 M640 1378.3 L1406 1378.3" stroke="#e6e9f1" stroke-width="1.6" stroke-dasharray="8 18.2" fill="none"></path>
<path d="M640 1397 C690 1372 740 1347.5 795.6 1347.5 C852 1347.5 905 1372 962 1403" fill="none" stroke="#f79a36" stroke-width="2.8"></path>
<path d="M664 1403 C690 1388 722 1377.5 754 1377.5 C787 1377.5 818 1388 845 1403" fill="none" stroke="#4fc15c" stroke-width="2.8"></path></svg>
<div style="left:1516.5px;top:1212px;width:871px;height:132px;border-radius:15px;background:#f8f9fb;border:1.5px solid #e8eaee"></div>
<div class="t" style="left: 1543px; top: 1253.5px; font-size: 24px; color: rgb(42, 86, 232); letter-spacing: -0.21px;">CWE- 79</div>
<div style="left:1653.5px;top:1237.3px;width:144px;height:30.5px;border-radius:16px;background:linear-gradient(90deg,#d3eeff,#d9d4fa)"></div>
<div class="t sb" style="left: 1668px; top: 1251.7px; font-size: 20px; color: rgb(36, 41, 56); -webkit-text-stroke-width: 0.8px; letter-spacing: 0.29px;">Top 25 CWE</div>
<div style="left:1811.3px;top:1237.3px;width:167.6px;height:30.5px;border-radius:16px;background:#efdcfc"></div>
<div class="t sb" style="left: 1825px; top: 1251.7px; font-size: 20px; color: rgb(36, 41, 56); -webkit-text-stroke-width: 0.8px; letter-spacing: 0.06px;">OWASP Top 10</div>
<div class="t" style="left: 1543px; top: 1300.5px; font-size: 24px; color: rgb(31, 36, 48); letter-spacing: 0.17px;">Cross-Site Scripting (XSS)</div>
<div class="t sb" style="left:2270px;top:1277px;font-size:24px;color:#1f2430">6</div>
<div class="t" style="left: 2291px; top: 1277px; font-size: 24px; color: rgb(31, 36, 48); letter-spacing: 0.02px;">Issues</div>
<div style="left:1516.5px;top:1364.3px;width:871px;height:132px;border-radius:15px;background:#fff;border:1.5px solid #e8eaee"></div>
<div class="t" style="left: 1543px; top: 1405.8px; font-size: 24px; color: rgb(42, 86, 232); letter-spacing: -0.21px;">CWE- 79</div>
<div style="left:1653.5px;top:1389.6px;width:144px;height:30.5px;border-radius:16px;background:linear-gradient(90deg,#d3eeff,#d9d4fa)"></div>
<div class="t sb" style="left: 1668px; top: 1404px; font-size: 20px; color: rgb(36, 41, 56); -webkit-text-stroke-width: 0.8px; letter-spacing: 0.29px;">Top 25 CWE</div>
<div style="left:1811.3px;top:1389.6px;width:167.6px;height:30.5px;border-radius:16px;background:#efdcfc"></div>
<div class="t sb" style="left: 1825px; top: 1404px; font-size: 20px; color: rgb(36, 41, 56); -webkit-text-stroke-width: 0.8px; letter-spacing: 0.06px;">OWASP Top 10</div>
<svg style="left:1994px;top:1392.3px" width="29" height="29" viewBox="0 0 29 29"><rect x="1.3" y="1.3" width="26.4" height="26.4" rx="7" fill="none" stroke="#2a56e8" stroke-width="2.5"></rect></svg>
<!--/MC-->
</div></div>


</body></html>
